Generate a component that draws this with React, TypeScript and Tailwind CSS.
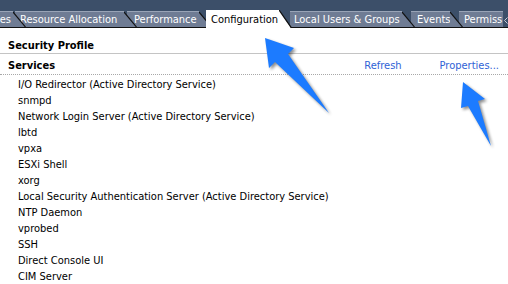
import React from "react";

const FONT = "font-['DejaVu_Sans_Condensed','DejaVu_Sans',sans-serif]";

function Slant({ fill }: { fill: string }) {
  return (
    <svg
      className="absolute left-full top-0 h-full"
      width="13"
      viewBox="0 0 13 16"
      preserveAspectRatio="none"
    >
      <polygon points="0,0 12,16 0,16" fill={fill} />
      <line x1="0" y1="0" x2="12.5" y2="16" stroke="#111" strokeWidth="1.2" />
    </svg>
  );
}

const services = [
  "I/O Redirector (Active Directory Service)",
  "snmpd",
  "Network Login Server (Active Directory Service)",
  "lbtd",
  "vpxa",
  "ESXi Shell",
  "xorg",
  "Local Security Authentication Server (Active Directory Service)",
  "NTP Daemon",
  "vprobed",
  "SSH",
  "Direct Console UI",
  "CIM Server",
];

export default function App() {
  return (
    <div className={`relative w-[508px] h-[284px] overflow-hidden bg-white text-[11px] ${FONT}`}>
      {/* Tab bar */}
      <div className="flex h-[28px] items-end border-b border-[#111] bg-[#3c4f69] text-[11px]">
        <div className="relative z-[7] ml-[-20px] flex h-[16px] w-[33px] items-center justify-end border-t border-[#98a3b6] bg-[#6f7c94] pr-[2px] pt-[2px] text-white">
          es
          <Slant fill="#6f7c94" />
        </div>
        <div className="relative z-[6] ml-[2px] flex h-[16px] w-[109px] items-center border-t border-[#98a3b6] bg-[#6f7c94] pl-[5px] pt-[2px] text-white">
          Resource Allocation
          <Slant fill="#6f7c94" />
        </div>
        <div className="relative z-[5] ml-[3px] flex h-[16px] w-[72px] items-center border-t border-[#98a3b6] bg-[#6f7c94] pl-[7px] pt-[2px] text-white">
          Performance
          <Slant fill="#6f7c94" />
        </div>
        <div className="relative z-[10] -mb-px ml-[7px] flex h-[18px] w-[73px] items-center whitespace-nowrap bg-white pl-[5px] pt-[2px] text-black">
          Configuration
          <Slant fill="#ffffff" />
        </div>
        <div className="relative z-[3] ml-[11px] flex h-[16px] w-[112px] items-center whitespace-nowrap border-t border-[#98a3b6] bg-[#6f7c94] pl-[4px] pt-[2px] text-white">
          Local Users &amp; Groups
          <Slant fill="#6f7c94" />
        </div>
        <div className="relative z-[2] ml-[9px] flex h-[16px] w-[39px] items-center border-t border-[#98a3b6] bg-[#6f7c94] pl-[6px] pt-[2px] text-white">
          Events
          <Slant fill="#6f7c94" />
        </div>
        <div className="relative z-[1] ml-[9px] flex h-[16px] w-[44px] items-center overflow-hidden whitespace-nowrap border-t border-[#98a3b6] bg-[#6f7c94] pl-[5px] pt-[2px] text-white">
          Permiss
        </div>
        <div className="flex h-[16px] flex-1 items-center justify-center pt-[2px]">
          <svg width="4" height="7" viewBox="0 0 4 7">
            <polyline points="3.5,0.5 0.5,3.5 3.5,6.5" fill="none" stroke="#c8cfdb" strokeWidth="1" />
          </svg>
        </div>
      </div>

      {/* Content */}
      <div className="pt-[9px]">
        <div className="h-[17px] border-b border-[#c4c4c4] pl-[8px] pt-[1px] font-bold leading-[16px] text-black">
          Security Profile
        </div>
        <div className="flex h-[21px] items-center border-b border-dotted border-[#a8a8a8] pl-[8px] pr-[9px] pt-[4px]">
          <span className="font-bold text-black">Services</span>
          <span className="ml-auto text-[#2f62d6]">Refresh</span>
          <span className="ml-[38px] text-[#2f62d6]">Properties...</span>
        </div>
        <div className="flex flex-col pl-[18px] pt-[2px]">
          {services.map((s) => (
            <div key={s} className="h-[16px] leading-[16px] text-black whitespace-nowrap">
              {s}
            </div>
          ))}
        </div>
      </div>

      {/* Annotation arrows */}
      <svg className="pointer-events-none absolute left-0 top-0" width="508" height="284" viewBox="0 0 508 284">
        <defs>
          <filter id="sh" x="-20%" y="-20%" width="140%" height="140%">
            <feGaussianBlur stdDeviation="1.5" />
          </filter>
        </defs>
        <g transform="translate(2,2)" filter="url(#sh)" fill="#000" opacity="0.45">
          <polygon points="265,38 294,48 288,54 329,113 275,62 269,68" />
          <polygon points="463,82 485,99 478,101 491,146 468,106 461,108" />
        </g>
        <g fill="#1c7bff">
          <polygon points="265,38 294,48 288,54 329,113 275,62 269,68" />
          <polygon points="463,82 485,99 478,101 491,146 468,106 461,108" />
        </g>
      </svg>
    </div>
  );
}
